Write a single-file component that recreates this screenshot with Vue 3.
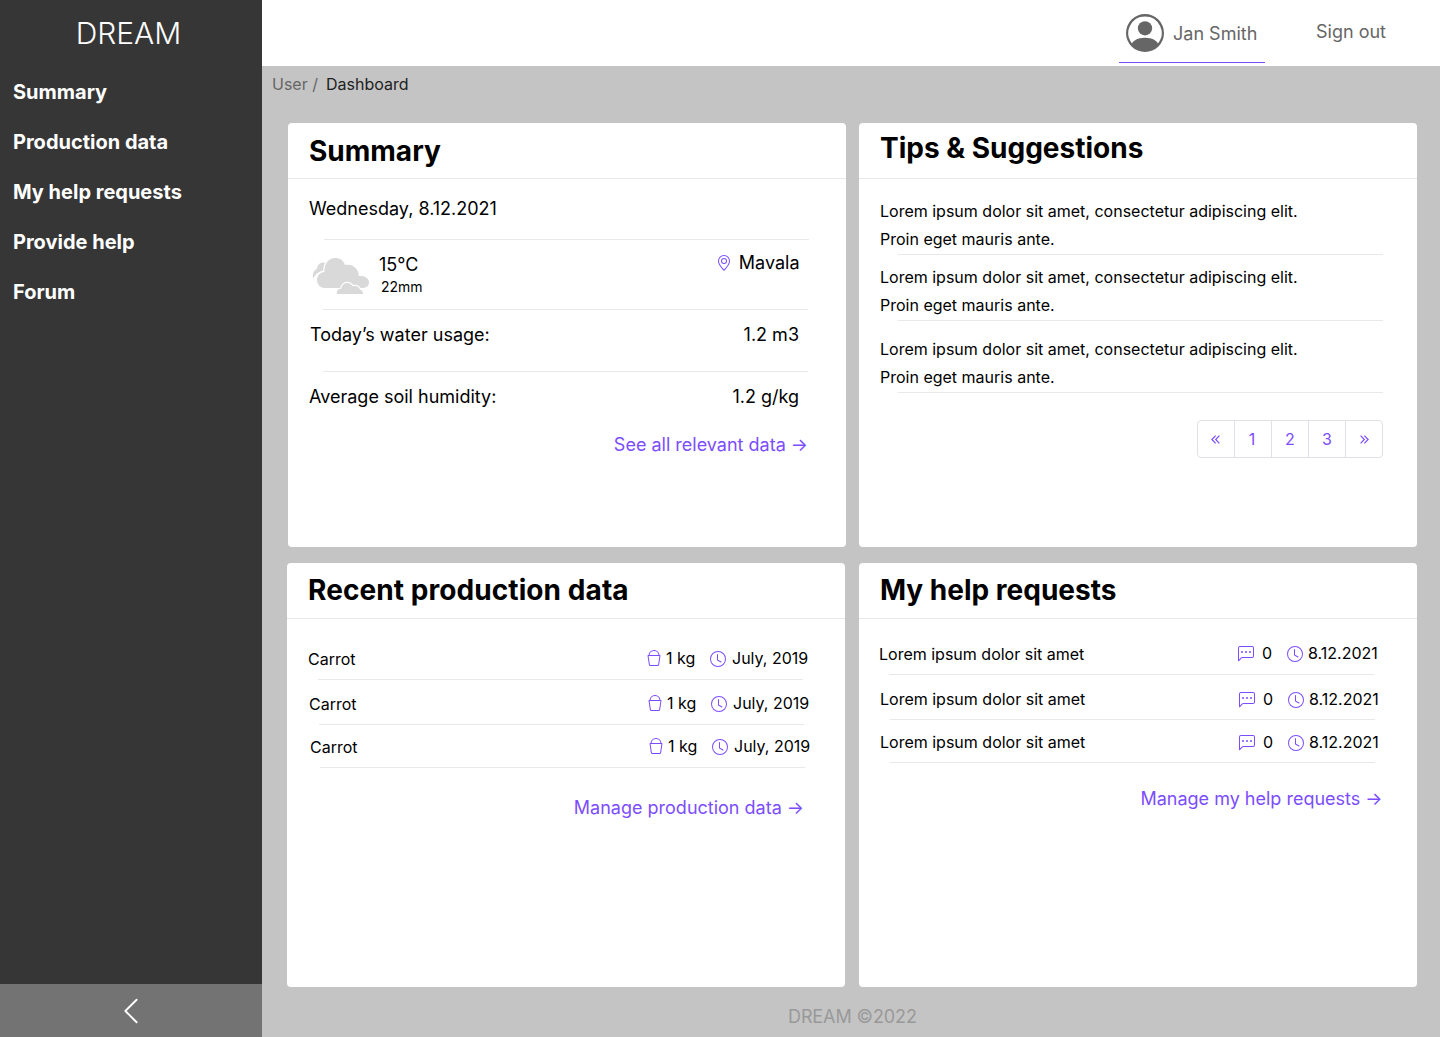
<script setup>
const nav = ['Summary', 'Production data', 'My help requests', 'Provide help', 'Forum']

const icons = {
  clock: 'M8 3.5a.5.5 0 0 0-1 0V9a.5.5 0 0 0 .252.434l3.5 2a.5.5 0 0 0 .496-.868L8 8.71V3.5zM8 16A8 8 0 1 0 8 0a8 8 0 0 0 0 16zm7-8A7 7 0 1 1 1 8a7 7 0 0 1 14 0z',
  bucket: 'M2.522 5H2a.5.5 0 0 0-.494.574l1.372 9.149A1.5 1.5 0 0 0 4.36 16h7.278a1.5 1.5 0 0 0 1.483-1.277l1.373-9.149A.5.5 0 0 0 14 5h-.522A5.5 5.5 0 0 0 2.522 5zm1.005 0a4.5 4.5 0 0 1 8.945 0H3.527zm9.892 1-1.286 8.574a.5.5 0 0 1-.494.426H4.36a.5.5 0 0 1-.494-.426L2.58 6h10.838z',
  chat: 'M14 1a1 1 0 0 1 1 1v8a1 1 0 0 1-1 1H4.414A2 2 0 0 0 3 11.586l-2 2V2a1 1 0 0 1 1-1h12zM2 0a2 2 0 0 0-2 2v12.793a.5.5 0 0 0 .854.353l2.853-2.853A1 1 0 0 1 4.414 12H14a2 2 0 0 0 2-2V2a2 2 0 0 0-2-2H2zM5 6a1 1 0 1 1-2 0 1 1 0 0 1 2 0zm4 0a1 1 0 1 1-2 0 1 1 0 0 1 2 0zm4 0a1 1 0 1 1-2 0 1 1 0 0 1 2 0z',
  pin: 'M12.166 8.94c-.524 1.062-1.234 2.12-1.96 3.07A31.493 31.493 0 0 1 8 14.58a31.481 31.481 0 0 1-2.206-2.57c-.726-.95-1.436-2.008-1.96-3.07C3.304 7.867 3 6.862 3 6a5 5 0 0 1 10 0c0 .862-.305 1.867-.834 2.94zM8 16s6-5.686 6-10A6 6 0 0 0 2 6c0 4.314 6 10 6 10zM8 8a2 2 0 1 1 0-4 2 2 0 0 1 0 4zm0 1a3 3 0 1 0 0-6 3 3 0 0 0 0 6z',
}

const tip = ['Lorem ipsum dolor sit amet, consectetur adipiscing elit.', 'Proin eget mauris ante.']
const tips = [tip, tip, tip]
const pages = [1, 2, 3]

const production = [
  { crop: 'Carrot', amount: '1 kg', date: 'July, 2019' },
  { crop: 'Carrot', amount: '1 kg', date: 'July, 2019' },
  { crop: 'Carrot', amount: '1 kg', date: 'July, 2019' },
]
const requests = [
  { title: 'Lorem ipsum dolor sit amet', replies: 0, date: '8.12.2021' },
  { title: 'Lorem ipsum dolor sit amet', replies: 0, date: '8.12.2021' },
  { title: 'Lorem ipsum dolor sit amet', replies: 0, date: '8.12.2021' },
]
</script>

<template>
  <div class="app">
    <aside class="sidebar">
      <div class="brand">DREAM</div>
      <nav class="nav">
        <a v-for="item in nav" :key="item" class="nav-item">{{ item }}</a>
      </nav>
      <button class="collapse" aria-label="Collapse">
        <svg width="30" height="30" viewBox="0 0 16 16" fill="currentColor">
          <path d="M11.354 1.646a.5.5 0 0 1 0 .708L5.707 8l5.647 5.646a.5.5 0 0 1-.708.708l-6-6a.5.5 0 0 1 0-.708l6-6a.5.5 0 0 1 .708 0z" />
        </svg>
      </button>
    </aside>

    <div class="page">
      <header class="topbar">
        <a class="user">
          <svg width="38" height="38" viewBox="0 0 16 16" fill="currentColor">
            <path d="M11 6a3 3 0 1 1-6 0 3 3 0 0 1 6 0z" />
            <path fill-rule="evenodd" d="M0 8a8 8 0 1 1 16 0A8 8 0 0 1 0 8zm8-7a7 7 0 0 0-5.468 11.37C3.242 11.226 4.805 10 8 10s4.757 1.225 5.468 2.37A7 7 0 0 0 8 1z" />
          </svg>
          <span>Jan Smith</span>
        </a>
        <a class="signout">Sign out</a>
      </header>

      <div class="crumbs"><span class="crumb-parent">User /</span><span>Dashboard</span></div>

      <main class="grid">
        <section class="card summary">
          <h2>Summary</h2>
          <p class="date">Wednesday, 8.12.2021</p>
          <div class="weather">
            <svg class="clouds" width="56" height="36" viewBox="99 429 168 108">
              <g fill="#d9d9d9">
                <path d="M99 490c-2-14 2-24 12-28 1-14 11-22 24-19l-4 22-20 10z" />
                <path class="outlined" d="M134 519a23 23 0 0 1-23-24c0-13 8-22 22-24 0-26 13-42 32-42 16 0 26 8 30 21 23-5 41 11 42 33 17-2 30 6 30 19 0 11-8 17-18 17z" />
                <path class="outlined" d="M170 537c-1-10 5-16 14-16 1-10 8-17 17-17 8 0 14 4 17 10 12-3 20 2 22 10 6 1 9 6 9 13z" />
              </g>
            </svg>
            <div class="readings">
              <span class="temp">15°C</span>
              <span class="rain">22mm</span>
            </div>
            <div class="place">
              <svg width="16" height="16" viewBox="0 0 16 16" class="icon"><path :d="icons.pin" /></svg>
              <span>Mavala</span>
            </div>
          </div>
          <div class="stat water"><span>Today’s water usage:</span><span>1.2 m3</span></div>
          <div class="stat soil"><span>Average soil humidity:</span><span>1.2 g/kg</span></div>
          <a class="more">See all relevant data →</a>
        </section>

        <section class="card tips">
          <h2>Tips &amp; Suggestions</h2>
          <div v-for="(lines, i) in tips" :key="i" class="tip">
            <div v-for="line in lines" :key="line">{{ line }}</div>
          </div>
          <div class="pager">
            <a class="step" aria-label="Previous">
              <svg width="9" height="9" viewBox="0 0 9 9"><path d="M4.6.6.9 4.5l3.7 3.9M8.4.6 4.7 4.5l3.7 3.9" /></svg>
            </a>
            <a v-for="p in pages" :key="p">{{ p }}</a>
            <a class="step" aria-label="Next">
              <svg width="9" height="9" viewBox="0 0 9 9"><path d="M.6.6l3.7 3.9L.6 8.4M4.4.6l3.7 3.9-3.7 3.9" /></svg>
            </a>
          </div>
        </section>

        <section class="card production">
          <h2>Recent production data</h2>
          <div v-for="(row, i) in production" :key="i" class="row">
            <span class="name">{{ row.crop }}</span>
            <svg width="16" height="16" viewBox="0 0 16 16" class="icon"><path :d="icons.bucket" /></svg>
            <span class="count">{{ row.amount }}</span>
            <svg width="16" height="16" viewBox="0 0 16 16" class="icon clock"><path :d="icons.clock" /></svg>
            <span class="when">{{ row.date }}</span>
          </div>
          <a class="more">Manage production data →</a>
        </section>

        <section class="card requests">
          <h2>My help requests</h2>
          <div v-for="(row, i) in requests" :key="i" class="row">
            <span class="name">{{ row.title }}</span>
            <svg width="16" height="16" viewBox="0 0 16 16" class="icon"><path :d="icons.chat" /></svg>
            <span class="count">{{ row.replies }}</span>
            <svg width="16" height="16" viewBox="0 0 16 16" class="icon clock"><path :d="icons.clock" /></svg>
            <span class="when">{{ row.date }}</span>
          </div>
          <a class="more">Manage my help requests →</a>
        </section>
      </main>

      <footer class="footer">DREAM ©2022</footer>
    </div>
  </div>
</template>

<style>
body { margin: 0; }
</style>

<style scoped>
* { box-sizing: border-box; }
.app {
  display: flex;
  width: 1440px;
  height: 1037px;
  overflow: hidden;
  background: #c4c4c4;
  color: #000;
  font-family: Inter, sans-serif;
  font-size: 18px;
  white-space: nowrap;
}
.sidebar {
  display: flex;
  flex-direction: column;
  width: 262px;
  background: #363636;
  color: #fff;
}
.brand {
  height: 67px;
  padding-right: 5px;
  line-height: 66px;
  font-size: 30px;
  font-weight: 300;
  text-align: center;
}
.nav { display: flex; flex-direction: column; flex: 1; }
.nav-item {
  height: 49.9px;
  padding-left: 13px;
  line-height: 50px;
  font-size: 20px;
  font-weight: 700;
}
.collapse {
  display: flex;
  align-items: center;
  justify-content: center;
  height: 53px;
  padding: 0;
  border: 0;
  background: #737373;
  color: #fff;
}
.page { display: flex; flex-direction: column; width: 1178px; }
.topbar {
  display: flex;
  align-items: flex-start;
  height: 66px;
  padding-left: 857px;
  background: #fff;
  color: #666;
}
.user {
  display: flex;
  gap: 9px;
  width: 146px;
  height: 63px;
  padding: 14px 0 0 7px;
  border-bottom: 1px solid #7c4dff;
  line-height: 39px;
}
.signout { margin-left: 51px; line-height: 63px; }
.crumbs {
  display: flex;
  gap: 8px;
  height: 57px;
  padding-left: 10px;
  line-height: 37px;
  font-size: 16px;
  color: #212121;
}
.crumb-parent { color: #666; }
.grid {
  display: grid;
  grid-template-columns: 558px 558px;
  grid-template-rows: 424px 424px;
  gap: 16px 13px;
  padding-left: 26px;
}
.card {
  display: flex;
  flex-direction: column;
  border-radius: 4px;
  background: #fff;
}
h2 {
  flex: none;
  height: 56px;
  margin: 0;
  padding-left: 21px;
  border-bottom: 1px solid #e8e8e8;
  line-height: 55px;
  font-size: 28px;
  font-weight: 700;
}
.summary h2 { line-height: 57px; }
.tips h2 { line-height: 50px; }
.production h2 { letter-spacing: 0.08px; }
.icon { flex: none; fill: #7c4dff; }
.more { align-self: flex-end; line-height: 28px; color: #7c4dff; }

.date { height: 60px; margin: 0; padding-left: 21px; line-height: 60px; }
.weather {
  display: flex;
  height: 70px;
  margin: 0 37px 0 36px;
  border-top: 1px solid #e8e8e8;
}
.clouds { margin: 18px 0 0 -11px; overflow: visible; }
.clouds .outlined { stroke: #fff; stroke-width: 7; paint-order: stroke; }
.readings { display: flex; flex-direction: column; margin: 13px 0 0 10px; }
.temp { line-height: 24px; }
.rain { padding-left: 2px; line-height: 20px; font-size: 14px; }
.place {
  display: flex;
  gap: 7px;
  margin: 11px 9.5px 0 auto;
  line-height: 24px;
}
.place .icon { margin-top: 4px; }
.stat {
  display: flex;
  justify-content: space-between;
  height: 62px;
  margin: 0 38px 0 35px;
  padding-right: 9px;
  border-top: 1px solid #e8e8e8;
  line-height: 50px;
}
.stat span:first-child { margin-left: -14px; }
.water span:first-child { margin-left: -13px; }
.summary .more { margin: -2px 38px 0 0; }

.tip { margin: 9px 0 0 21px; height: 58px; line-height: 28px; font-size: 16px; }
.tip:nth-of-type(1) { margin-top: 18px; }
.tip:nth-of-type(2) { margin-top: 8px; }
.tip:nth-of-type(3) { margin-top: 14px; }
.tip::after {
  content: '';
  display: block;
  width: 485px;
  height: 1px;
  margin: 1px 0 0 18px;
  background: #e8e8e8;
}
.pager {
  display: flex;
  align-self: flex-end;
  margin: 27px 34px 0 0;
  border: 1px solid #dee2e6;
  border-radius: 4px;
  color: #7c4dff;
  font-size: 16px;
}
.pager a { width: 37px; height: 36px; line-height: 36px; text-align: center; }
.pager a + a { border-left: 1px solid #dee2e6; }
.pager a:first-child { width: 36px; padding-right: 1px; }
.pager a:nth-child(2) { padding-right: 2px; }
.pager .step { display: flex; align-items: center; justify-content: center; }
.step svg { fill: none; stroke: currentColor; stroke-width: 1.2; }

.row {
  display: flex;
  flex: none;
  flex-wrap: wrap;
  align-content: flex-start;
  padding-left: 21px;
  line-height: 24px;
  font-size: 16px;
}
.row::after {
  content: '';
  width: 485px;
  height: 1px;
  margin: 8px 20px 0 10px;
  background: #e8e8e8;
}
.row:nth-of-type(1) { height: 45px; }
.row:nth-of-type(2) { height: 43px; }
.row:nth-of-type(3) { height: 34px; }

.production { margin-left: -1px; width: 558px; }
.production .row:nth-of-type(1) { margin-top: 27px; }
.production .row:nth-of-type(2) { padding-left: 22px; }
.production .row:nth-of-type(3) { padding-left: 23px; }
.production .name { width: 338px; padding-top: 1px; }
.production .icon { margin-top: 4px; }
.production .clock { margin-top: 5px; }
.production .count { width: 48px; padding-left: 4px; }
.production .when { padding-left: 6px; }
.production .more { margin: 26px 41px 0 0; }

.requests .row:nth-of-type(1) { padding-left: 20px; margin-top: 22px; }
.requests .name { width: 359px; padding-top: 1px; }
.requests .icon { margin-top: 5px; }
.requests .count { width: 33px; padding-left: 8px; }
.requests .when { padding-left: 5px; }
.requests .row + .row .icon { margin-top: 6px; }
.requests .row + .row .count,
.requests .row + .row .when { padding-top: 1px; }
.requests .more { margin: 22px 34.5px 0 0; }

.footer {
  padding-left: 526px;
  margin-top: 14px;
  line-height: 32px;
  letter-spacing: -0.1px;
  color: #999;
}
</style>
